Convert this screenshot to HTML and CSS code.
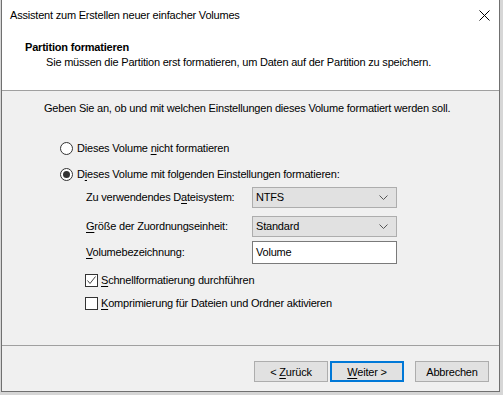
FILE: index.html
```html
<!DOCTYPE html>
<html lang="de">
<head>
    <meta charset="UTF-8">
    <meta name="viewport" content="width=device-width, initial-scale=1.0">
    <title>Assistent zum Erstellen neuer einfacher Volumes</title>
    <link rel="stylesheet" href="styles.css">
</head>
<body>
    <div class="window">
        <div class="top">
            <div class="titlebar">
                <span class="title">Assistent zum Erstellen neuer einfacher Volumes</span>
                <svg class="close" width="11" height="11" viewBox="0 0 11 11">
                    <path d="M0.5 0.5 L10.5 10.5 M10.5 0.5 L0.5 10.5" stroke="#000" stroke-width="1" fill="none"/>
                </svg>
            </div>
            <div class="head">
                <div class="head-title">Partition formatieren</div>
                <div class="head-sub">Sie müssen die Partition erst formatieren, um Daten auf der Partition zu speichern.</div>
            </div>
        </div>

        <div class="content">
            <p class="intro">Geben Sie an, ob und mit welchen Einstellungen dieses Volume formatiert werden soll.</p>

            <div class="option first"><span class="radio"></span><span>Dieses Volume <u>n</u>icht formatieren</span></div>
            <div class="option second"><span class="radio checked"></span><span>D<u>i</u>eses Volume mit folgenden Einstellungen formatieren:</span></div>

            <div class="settings">
                <div class="row row-fs">
                    <span class="field-label">Zu verwendendes D<u>a</u>teisystem:</span>
                    <div class="select"><span>NTFS</span>
                        <svg width="9" height="5" viewBox="0 0 9 5"><path d="M0.5 0.5 L4.5 4.5 L8.5 0.5" stroke="#555" fill="none"/></svg>
                    </div>
                </div>
                <div class="row row-au">
                    <span class="field-label"><u>G</u>röße der Zuordnungseinheit:</span>
                    <div class="select"><span>Standard</span>
                        <svg width="9" height="5" viewBox="0 0 9 5"><path d="M0.5 0.5 L4.5 4.5 L8.5 0.5" stroke="#555" fill="none"/></svg>
                    </div>
                </div>
                <div class="row row-name">
                    <span class="field-label"><u>V</u>olumebezeichnung:</span>
                    <div class="textbox"><span>Volume</span></div>
                </div>
            </div>

            <div class="check first">
                <span class="box">
                    <svg width="11" height="11" viewBox="0 0 11 11"><path d="M1.5 5.5 L4 8.5 L9.5 1.5" stroke="#444" fill="none"/></svg>
                </span><span><u>S</u>chnellformatierung durchführen</span>
            </div>
            <div class="check second"><span class="box"></span><span><u>K</u>omprimierung für Dateien und Ordner aktivieren</span></div>
        </div>

        <div class="footer">
            <button class="btn">&lt; <u>Z</u>urück</button>
            <button class="btn default"><u>W</u>eiter &gt;</button>
            <button class="btn cancel">Abbrechen</button>
        </div>
    </div>
</body>
</html>
```

FILE: styles.css
```css
body {
    margin: 0;
    background-color: #d6d6d6;
    font-family: "Liberation Sans", Arial, sans-serif;
    font-size: 11px;
    letter-spacing: -0.2px;
    line-height: 15px;
    color: #000;
}
.window {
    width: 499px;
    margin-left: 1px;
    box-sizing: border-box;
    border: 1px solid #707070;
    border-top: none;
    background-color: #f0f0f0;
    white-space: nowrap;
}
u {
    text-underline-offset: 2px;
}
/* Kopfbereich */
.top {
    background-color: #fff;
    height: 91px;
    box-sizing: border-box;
    border-bottom: 1px solid #a0a0a0;
}
.titlebar {
    height: 30px;
    box-sizing: border-box;
    padding: 8px 9px 0 8px;
    display: flex;
    justify-content: space-between;
    align-items: flex-start;
}
.close {
    margin-top: 2px;
}
.head {
    padding: 10px 0 0 23px;
}
.head-title {
    font-weight: bold;
}
.head-sub {
    padding-left: 21px;
}
/* Inhalt */
.content {
    height: 254px;
    padding-top: 10px;
    box-sizing: border-box;
}
.intro {
    margin: 0;
    padding-left: 42px;
}
.option {
    display: flex;
    align-items: center;
    padding-left: 58px;
}
.option.first {
    margin-top: 25px;
}
.option.second {
    margin-top: 11px;
}
.radio {
    width: 13px;
    height: 13px;
    box-sizing: border-box;
    border: 1px solid #333;
    border-radius: 50%;
    background-color: #fff;
    margin-right: 4px;
    display: flex;
    align-items: center;
    justify-content: center;
}
.radio.checked::after {
    content: "";
    width: 7px;
    height: 7px;
    border-radius: 50%;
    background-color: #333;
}
.settings {
    margin-top: 5px;
    padding-left: 84px;
}
.row {
    display: flex;
    align-items: center;
}
.row-fs {
    height: 21px;
    margin-bottom: 8px;
}
.row-au {
    height: 21px;
    margin-bottom: 4px;
}
.row-name {
    height: 23px;
}
.field-label {
    width: 166px;
}
.select {
    width: 145px;
    height: 100%;
    box-sizing: border-box;
    border: 1px solid #adadad;
    background-color: #e1e1e1;
    padding: 0 8px 0 3px;
    display: flex;
    align-items: center;
    justify-content: space-between;
}
.textbox {
    width: 145px;
    height: 100%;
    box-sizing: border-box;
    border: 1px solid #7a7a7a;
    background-color: #fff;
    padding-left: 3px;
    display: flex;
    align-items: center;
}
.check {
    display: flex;
    align-items: center;
    padding-left: 83px;
}
.check.first {
    margin-top: 9px;
}
.check.second {
    margin-top: 8px;
}
.box {
    width: 13px;
    height: 13px;
    box-sizing: border-box;
    border: 1px solid #333;
    background-color: #fff;
    margin-right: 3px;
    display: flex;
    align-items: center;
    justify-content: center;
}
/* Schaltflächen */
.footer {
    border-top: 1px solid #a0a0a0;
    padding: 15px 10px 9px 0;
    display: flex;
    justify-content: flex-end;
}
.btn {
    width: 74px;
    height: 21px;
    box-sizing: border-box;
    border: 1px solid #adadad;
    background-color: #e1e1e1;
    font-family: inherit;
    font-size: 11px;
    letter-spacing: -0.2px;
    color: #000;
    padding: 0;
    margin: 0;
}
.btn.default {
    border: 2px solid #0078d7;
    margin-left: 2px;
}
.btn.cancel {
    margin-left: 11px;
}
```
